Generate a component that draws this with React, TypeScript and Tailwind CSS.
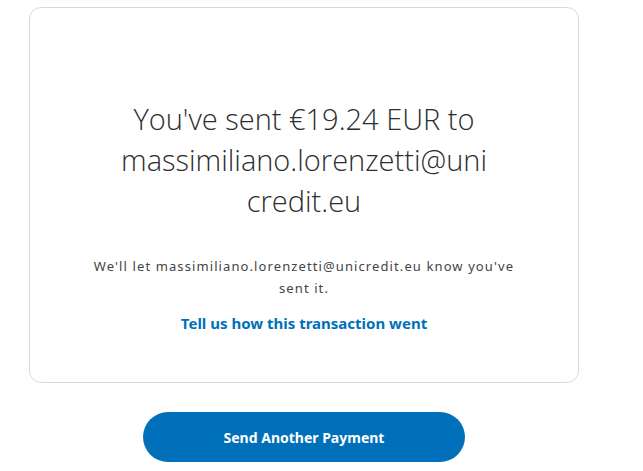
export default function App() {
  return (
    <div className="min-h-screen bg-white pt-[7px]">
      <div className="ml-[29px] w-[550px] h-[376px] rounded-xl border border-[#dcdad0] flex flex-col items-center pt-[90px]">
        <h1 className="w-[372px] text-center text-[29px] leading-[41px] font-light text-[#2c2e2f] break-words font-['Open_Sans',sans-serif]">
          You've sent €19.24 EUR to massimiliano.lorenzetti@unicredit.eu
        </h1>
        <p className="mt-[34px] w-[430px] text-center text-[13px] leading-[22px] tracking-[1.1px] text-[#444] font-['Noto_Sans',sans-serif]">
          We'll let massimiliano.lorenzetti@unicredit.eu know you've sent it.
        </p>
        <a
          href="#"
          className="mt-[14px] text-[15px] leading-[20px] font-bold text-[#0070ba] font-['Noto_Sans',sans-serif]"
        >
          Tell us how this transaction went
        </a>
      </div>
      <div className="mt-[29px] ml-[143px]">
        <button className="w-[322px] h-[50px] rounded-full bg-[#0070ba] text-white text-[14px] font-bold font-['Noto_Sans',sans-serif]">
          Send Another Payment
        </button>
      </div>
    </div>
  );
}
